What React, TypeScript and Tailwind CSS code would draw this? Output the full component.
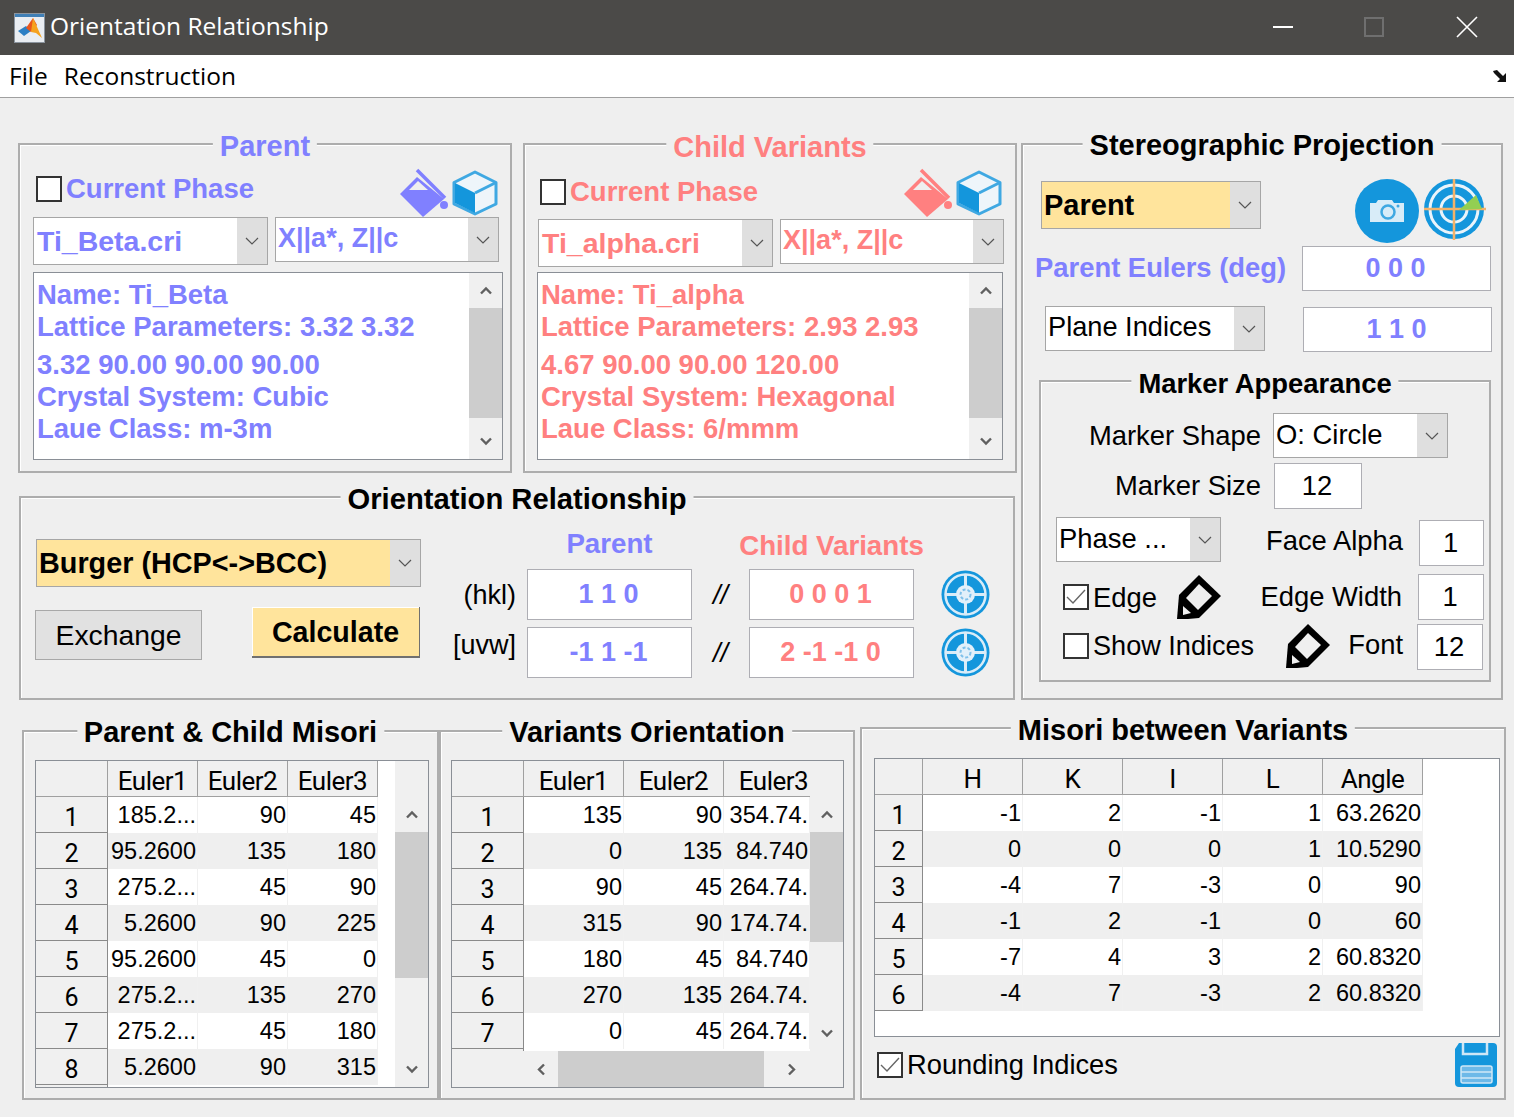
import React from 'react';

const BLUE = '#1496dc';

// Thin arrow of a combo box
const SelectArrow = () => (
  <svg width="14" height="8" viewBox="0 0 14 8" fill="none" stroke="#555" strokeWidth="1.2">
    <path d="M1 1l6 6 6-6" />
  </svg>
);

// Thick arrow of a scrollbar, rotated per direction
const ScrollArrow = ({ className = '' }: { className?: string }) => (
  <svg width="12" height="9" viewBox="0 0 12 9" fill="none" stroke="#606060" strokeWidth="2.4" className={className}>
    <path d="M1 7.5l5-5 5 5" />
  </svg>
);

const Bucket = ({ color }: { color: string }) => (
  <svg width="48" height="50" viewBox="0 0 48 50">
    <path d="M0 26L17 9L44 31L23 49Z" fill={color} />
    <path d="M17 2L45 30" stroke={color} strokeWidth="3.5" />
    <path d="M9 22L18 13L28 22Z" fill="#efefef" />
    <circle cx="44" cy="37" r="4" fill={color} />
  </svg>
);

const Cube = () => (
  <svg width="46" height="46" viewBox="0 0 46 46">
    <path d="M23 2L44 12.5V34L23 44L2 34V12.5Z" fill="#eef5fa" stroke="#3fa8e2" strokeWidth="3" strokeLinejoin="round" />
    <path d="M3 13L23 23V43L3 33Z" fill={BLUE} />
    <path d="M23 23L44 12.5" stroke="#3fa8e2" strokeWidth="3" />
  </svg>
);

const Camera = () => (
  <svg width="64" height="64" viewBox="0 0 64 64" className="shrink-0">
    <circle cx="32" cy="32" r="32" fill={BLUE} />
    <path d="M15 24h6l2-3h14l2 3h10v19H15z" fill="#d8ecf8" />
    <circle cx="33" cy="33" r="6.5" fill="none" stroke="#3fa8e2" strokeWidth="2.5" />
    <circle cx="43" cy="27" r="1.5" fill="#3fa8e2" />
  </svg>
);

const Radar = () => (
  <svg width="62" height="62" viewBox="0 0 62 62" className="shrink-0">
    <circle cx="30" cy="30" r="30" fill={BLUE} />
    <circle cx="30" cy="30" r="24" fill="none" stroke="#eaf4fb" strokeWidth="3" />
    <circle cx="30" cy="30" r="13" fill="none" stroke="#eaf4fb" strokeWidth="3" />
    <path d="M30 0V61M0 30H62" stroke="#f3b26a" strokeWidth="2.5" />
    <path d="M35 31L52 16L58 30Z" fill="#93cf52" />
  </svg>
);

const Target = () => (
  <svg width="49" height="49" viewBox="0 0 49 49" className="shrink-0">
    <circle cx="24.5" cy="24.5" r="24" fill={BLUE} />
    <circle cx="24.5" cy="24.5" r="20" fill="none" stroke="#d9ecf8" strokeWidth="2.5" />
    <path d="M24.5 4V45M4 24.5H45" stroke="#d9ecf8" strokeWidth="3" />
    <circle cx="24.5" cy="24.5" r="9.5" fill="#e2f0fa" />
    <circle cx="24.5" cy="24.5" r="5" fill="none" stroke="#7fc0ea" strokeWidth="2" strokeDasharray="3 2" />
  </svg>
);

const Pen = () => (
  <svg width="46" height="46" viewBox="0 0 46 46" className="shrink-0">
    <path d="M23 1L45 22L23 44L12 45H1L3 21Z" fill="#000" />
    <path d="M23 10L36 22L22 36L10 24Z" fill="#efefef" />
    <path d="M7 32L15 39L7 41Z" fill="#efefef" />
  </svg>
);

const Save = () => (
  <svg width="42" height="44" viewBox="0 0 42 44" className="shrink-0">
    <path d="M4 0H38Q42 0 42 4V40Q42 44 38 44H4Q0 44 0 40V6Z" fill={BLUE} />
    <path d="M8 0V11H32V0" fill="none" stroke="#cfe7f6" strokeWidth="2.5" />
    <rect x="6" y="23" width="31" height="17" rx="2" fill="#6db9e8" stroke="#cfe7f6" strokeWidth="1.5" />
    <path d="M6 29H37M6 35H37" stroke="#cfe7f6" strokeWidth="1.5" />
  </svg>
);

const MatlabIcon = () => (
  <svg width="31" height="30" viewBox="0 0 31 30" className="shrink-0">
    <rect x="0.5" y="0.5" width="30" height="29" fill="#e9edf2" stroke="#8b949e" />
    <rect x="1" y="1" width="29" height="3" fill="#3f7fb6" />
    <path d="M4 18L12 13L17 18L10 23Z" fill="#2c7fc4" />
    <path d="M12 15L19 5L23 12L17 19Z" fill="#e8551d" />
    <path d="M19 5L28 25L22 20L17 19Z" fill="#f6a21e" />
  </svg>
);

const Panel = ({ title, titleColor = 'text-black', titleSize = 'text-[29px]', titleTop = '-top-[14px]', className = '', children }: {
  title: string;
  titleColor?: string;
  titleSize?: string;
  titleTop?: string;
  className?: string;
  children: React.ReactNode;
}) => (
  <div className={`relative shrink-0 border-2 border-[#adadad] shadow-[inset_1px_1px_0_#fff] ${className}`}>
    <div className={`absolute left-1/2 -translate-x-1/2 whitespace-nowrap bg-[#efefef] px-[7px] font-bold leading-[30px] ${titleTop} ${titleColor} ${titleSize}`}>
      {title}
    </div>
    {children}
  </div>
);

const Select = ({ text, className = '', textClass = '', bg = 'bg-white' }: {
  text: string;
  className?: string;
  textClass?: string;
  bg?: string;
}) => (
  <div className={`flex shrink-0 border border-[#a6a6a6] ${bg} ${className}`}>
    <div className={`flex-1 overflow-hidden whitespace-nowrap pl-[2px] leading-[40px] ${textClass}`}>{text}</div>
    <div className="flex w-[30px] items-center justify-center bg-[#dfdfdf]">
      <SelectArrow />
    </div>
  </div>
);

const Field = ({ text, className = '', textClass = '' }: { text: string; className?: string; textClass?: string }) => (
  <div className={`flex shrink-0 items-center justify-center border border-[#aeaeb4] bg-white pr-[2px] ${textClass} ${className}`}>{text}</div>
);

const Check = ({ checked = false }: { checked?: boolean }) => (
  <div className="flex h-[26px] w-[26px] shrink-0 items-center justify-center border-2 border-[#333] bg-white">
    {checked && (
      <svg width="20" height="16" viewBox="0 0 20 16" fill="none" stroke="#666" strokeWidth="1.4">
        <path d="M1 8l6 6L19 1" />
      </svg>
    )}
  </div>
);

const VScroll = ({ thumb, topGap = 'h-[35px]' }: { thumb: string; topGap?: string }) => (
  <div className="flex h-full w-[33px] shrink-0 flex-col items-center bg-[#f0f0f0]">
    <div className={`flex w-full items-center justify-center ${topGap}`}>
      <ScrollArrow />
    </div>
    <div className={`w-full bg-[#cdcdcd] ${thumb}`} />
    <div className="flex-1" />
    <div className="flex h-[36px] w-full items-center justify-center">
      <ScrollArrow className="rotate-180" />
    </div>
  </div>
);

// Parent and child blocks share this layout, only the small offsets differ
const PhasePanel = ({ title, color, file, name, lines, rowClass, checkClass, listClass, titleTop }: {
  title: string;
  color: string;
  file: string;
  name: string;
  lines: string[];
  rowClass: string;
  checkClass: string;
  listClass: string;
  titleTop?: string;
}) => (
  <Panel title={title} titleColor={color} titleTop={titleTop} className="h-[330px] w-[494px]">
    <div className={`flex ${rowClass}`}>
      <div className={`flex items-center gap-[4px] ${checkClass}`}>
        <Check />
        <span className={`whitespace-nowrap text-[27.5px] font-bold leading-[26px] ${color}`}>Current Phase</span>
      </div>
      <div className="ml-auto flex items-start gap-[4px]">
        <Bucket color={color === 'text-[#8080ff]' ? '#8080ff' : '#ff8080'} />
        <div className="mt-[2px]">
          <Cube />
        </div>
      </div>
    </div>
    <div className="ml-[13px] flex gap-[7px]">
      <Select text={file} className="h-[48px] w-[235px]" textClass={`pl-[3px] text-[28.5px] font-bold leading-[46px] ${color}`} />
      <Select text="X||a*, Z||c" className="h-[45px] w-[224px]" textClass={`text-[27px] font-bold ${color}`} />
    </div>
    <div className={`flex h-[188px] border border-[#8a8f96] bg-white ${listClass}`}>
      <div className={`flex-1 pl-[3px] pt-[6px] text-[27.5px] font-bold leading-[32px] ${color}`}>
        <div>{name}</div>
        <div>{lines[0]}</div>
        <div className="mt-[6px]">{lines[1]}</div>
        <div>{lines[2]}</div>
        <div>{lines[3]}</div>
      </div>
      <VScroll thumb="h-[110px]" />
    </div>
  </Panel>
);

const Table = ({ headers, rows, headClass, colClasses, headColClasses, gridClass }: {
  headers: string[];
  rows: (string | number)[][];
  headClass: string;
  colClasses: string[];
  headColClasses?: string[];
  gridClass: string;
}) => (
  <div className={`overflow-hidden ${gridClass}`}>
    <div className="flex h-[36px]">
      <div className={`shrink-0 border-r border-b border-[#a0a0a0] bg-[#f0f0f0] ${headClass}`} />
      {headers.map((h, i) => (
        <div
          key={h}
          className={`shrink-0 border-r border-b border-[#a0a0a0] bg-[#f0f0f0] text-center font-['Roboto',sans-serif] text-[26px] leading-[41px] tracking-[-0.5px] ${(headColClasses ?? colClasses)[i]}`}
        >
          {h}
        </div>
      ))}
    </div>
    {rows.map((row, r) => (
      <div key={r} className="flex h-[36px]">
        <div className={`shrink-0 border-r border-b border-[#8a8a8a] bg-[#f0f0f0] text-center font-['Roboto',sans-serif] text-[25px] leading-[42px] ${headClass}`}>
          {row.length > 0 ? r + 1 : ''}
        </div>
        {row.map((cell, c) => (
          <div
            key={c}
            className={`shrink-0 overflow-hidden whitespace-nowrap border-r border-[#f0f0f0] pr-[1px] text-right text-[23.5px] leading-[37px] ${r % 2 === 0 ? 'bg-white' : 'bg-[#efefef]'} ${colClasses[c]}`}
          >
            {cell}
          </div>
        ))}
      </div>
    ))}
  </div>
);

const misoriRows = [
  ['185.2...', 90, 45],
  ['95.2600', 135, 180],
  ['275.2...', 45, 90],
  ['5.2600', 90, 225],
  ['95.2600', 45, 0],
  ['275.2...', 135, 270],
  ['275.2...', 45, 180],
  ['5.2600', 90, 315],
  [],
];

const variantRows = [
  [135, 90, '354.74.'],
  [0, 135, '84.740'],
  [90, 45, '264.74.'],
  [315, 90, '174.74.'],
  [180, 45, '84.740'],
  [270, 135, '264.74.'],
  [0, 45, '264.74.'],
  [],
];

const betweenRows = [
  [-1, 2, -1, 1, '63.2620'],
  [0, 0, 0, 1, '10.5290'],
  [-4, 7, -3, 0, 90],
  [-1, 2, -1, 0, 60],
  [-7, 4, 3, 2, '60.8320'],
  [-4, 7, -3, 2, '60.8320'],
];

const inputText = 'text-[27px] font-bold text-[#8080ff]';
const inputRed = 'text-[27px] font-bold text-[#ff8080]';

const App = () => {
  return (
    <div className="h-[1117px] w-[1514px] overflow-hidden bg-[#efefef] font-['Liberation_Sans',Arial,sans-serif] text-black">
      {/* Title bar */}
      <div className="flex h-[55px] items-center bg-[#4b4a48] pl-[14px] text-white">
        <MatlabIcon />
        <span className="mb-[3px] ml-[5px] font-['Open_Sans',sans-serif] text-[24.5px]">Orientation Relationship</span>
        <div className="ml-auto flex items-center pb-[2px]">
          <div className="h-[2px] w-[20px] bg-white" />
          <div className="ml-[71px] h-[20px] w-[20px] border-2 border-[#6f6f6f]" />
          <svg width="22" height="22" viewBox="0 0 22 22" stroke="#fff" strokeWidth="1.6" className="ml-[72px] mr-[36px]">
            <path d="M1 1L21 21M21 1L1 21" />
          </svg>
        </div>
      </div>

      {/* Menu bar */}
      <div className="flex h-[43px] items-center border-b border-[#a0a0a0] bg-white pl-[9px] font-['Open_Sans',sans-serif] text-[24.5px]">
        <span>File</span>
        <span className="ml-[16px]">Reconstruction</span>
        <svg width="16" height="14" viewBox="0 0 16 14" className="ml-auto mr-[6px]">
          <path d="M1 2L5 1L11 7L14 4V13H5L8 10L2 4Z" fill="#111" />
        </svg>
      </div>

      {/* Upper area */}
      <div className="ml-[18px] mt-[45px] flex">
        <div className="w-[999px] shrink-0">
          <div className="flex gap-[11px]">
            <PhasePanel
              title="Parent"
              color="text-[#8080ff]"
              file="Ti_Beta.cri"
              name="Name: Ti_Beta"
              lines={['Lattice Parameters: 3.32 3.32', '3.32 90.00 90.00 90.00', 'Crystal System: Cubic', 'Laue Class: m-3m']}
              rowClass="ml-[16px] mr-[12px] mt-[23px] h-[49px]"
              checkClass="mt-[8px] h-[26px]"
              listClass="ml-[13px] mt-[7px] w-[470px]"
            />
            <PhasePanel
              title="Child Variants"
              titleTop="-top-[13px]"
              color="text-[#ff8080]"
              file="Ti_alpha.cri"
              name="Name: Ti_alpha"
              lines={['Lattice Parameters: 2.93 2.93', '4.67 90.00 90.00 120.00', 'Crystal System: Hexagonal', 'Laue Class: 6/mmm']}
              rowClass="ml-[15px] mr-[13px] mt-[23px] h-[51px]"
              checkClass="mt-[11px] h-[26px]"
              listClass="ml-[12px] mt-[5px] w-[466px]"
            />
          </div>

          {/* Orientation relationship */}
          <Panel title="Orientation Relationship" titleSize="text-[29.2px]" className="ml-px mt-[23px] flex h-[204px] w-[996px]">
            <div className="w-[400px] shrink-0">
              <Select text="Burger (HCP<->BCC)" bg="bg-[#ffe49c]" className="ml-[15px] mt-[41px] h-[48px] w-[385px]" textClass="text-[28.8px] font-bold leading-[46px]" />
              <div className="ml-[14px] mt-[20px] flex items-start">
                <div className="mt-[3px] flex h-[50px] w-[167px] items-center justify-center border border-[#a8a8a8] bg-[#e1e1e1] text-[28.3px]">Exchange</div>
                <div className="ml-[50px] flex h-[51px] w-[168px] items-center justify-center border-r border-b-2 border-[#707070] bg-[#ffe49c] pt-[2px] text-[28.6px] font-bold shadow-[inset_1px_1px_0_#fff]">Calculate</div>
              </div>
            </div>
            <div className="flex-1">
              <div className="mt-[31px] flex h-[40px] items-start pl-[106px] text-[27.7px] font-bold">
                <div className="w-[165px] text-center leading-[30px] text-[#8080ff]">Parent</div>
                <div className="ml-[57px] mt-[2px] w-[165px] whitespace-nowrap text-center leading-[30px] text-[#ff8080]">
                  <span className="-mx-[10px] inline-block">Child Variants</span>
                </div>
              </div>
              <div className="flex items-center">
                <div className="w-[95px] text-right text-[27px] leading-[30px]">(hkl)</div>
                <Field text="1 1 0" className="ml-[11px] h-[51px] w-[165px]" textClass={inputText} />
                <div className="w-[57px] text-center text-[27px] leading-[30px] italic">//</div>
                <Field text="0 0 0 1" className="h-[51px] w-[165px]" textClass={inputRed} />
                <div className="ml-[27px]"><Target /></div>
              </div>
              <div className="mt-[7px] flex items-center">
                <div className="mb-[15px] w-[95px] text-right text-[27px] leading-[30px]">[uvw]</div>
                <Field text="-1 1 -1" className="ml-[11px] h-[51px] w-[165px]" textClass={inputText} />
                <div className="w-[57px] text-center text-[27px] leading-[30px] italic">//</div>
                <Field text="2 -1 -1 0" className="h-[51px] w-[165px]" textClass={inputRed} />
                <div className="ml-[27px]"><Target /></div>
              </div>
            </div>
          </Panel>
        </div>

        {/* Stereographic projection */}
        <Panel title="Stereographic Projection" titleTop="-top-[15px]" className="ml-[4px] h-[557px] w-[482px]">
          <div className="ml-[18px] mr-[15px] mt-[34px] flex h-[64px] items-start">
            <Select text="Parent" bg="bg-[#ffe49c]" className="mt-[2px] h-[48px] w-[220px]" textClass="text-[29px] font-bold leading-[46px]" />
            <div className="ml-auto flex gap-[5px]">
              <Camera />
              <Radar />
            </div>
          </div>
          <div className="ml-[12px] mt-[3px] flex items-center">
            <div className="mb-[2px] w-[267px] whitespace-nowrap text-[27.4px] font-bold text-[#8080ff]">Parent Eulers (deg)</div>
            <Field text="0 0 0" className="h-[45px] w-[189px]" textClass={inputText} />
          </div>
          <div className="ml-[22px] mt-[15px] flex items-start">
            <Select text="Plane Indices" className="h-[45px] w-[220px]" textClass="text-[27.2px]" />
            <Field text="1 1 0" className="ml-[38px] mt-px h-[45px] w-[189px]" textClass={inputText} />
          </div>

          {/* Marker appearance */}
          <Panel title="Marker Appearance" titleSize="text-[27.4px]" titleTop="-top-[13px]" className="ml-[16px] mt-[28px] h-[302px] w-[452px] text-[27.4px]">
            <div className="mt-[31px] flex items-center">
              <div className="w-[220px] text-right">Marker Shape</div>
              <Select text="O: Circle" className="ml-[12px] h-[45px] w-[175px]" textClass="pt-px" />
            </div>
            <div className="mt-[5px] flex items-center">
              <div className="w-[220px] text-right">Marker Size</div>
              <Field text="12" className="ml-[13px] h-[46px] w-[88px]" />
            </div>
            <div className="mt-[8px] flex items-start">
              <Select text="Phase ..." className="ml-[15px] h-[45px] w-[165px]" textClass="pt-px" />
              <div className="mt-[3px] w-[182px] text-right leading-[42px]">Face Alpha</div>
              <Field text="1" className="ml-[16px] mt-[3px] h-[46px] w-[65px]" />
            </div>
            <div className="mt-[8px] flex items-center">
              <div className="flex w-[135px] items-center gap-[4px] pl-[22px]">
                <Check checked />
                <span className="mt-[1px]">Edge</span>
              </div>
              <Pen />
              <div className="w-[180px] text-right">Edge Width</div>
              <Field text="1" className="ml-[16px] h-[46px] w-[66px]" />
            </div>
            <div className="mt-[2px] flex items-center">
              <div className="flex w-[244px] items-center gap-[4px] pl-[22px]">
                <Check />
                <span className="mt-[1px] whitespace-nowrap text-[27.1px]">Show Indices</span>
              </div>
              <Pen />
              <div className="mb-[2px] w-[72px] text-right">Font</div>
              <Field text="12" className="ml-[14px] mt-[2px] h-[46px] w-[66px]" />
            </div>
          </Panel>
        </Panel>
      </div>

      {/* Tables */}
      <div className="mt-[27px] flex pl-[22px]">
        <Panel title="Parent & Child Misori" titleTop="-top-[15px]" className="mt-[3px] h-[370px] w-[417px]">
          <div className="ml-[11px] mt-[28px] flex h-[328px] w-[394px] border border-[#8a8f96] bg-white">
            <Table
              headers={['Euler1', 'Euler2', 'Euler3']}
              rows={misoriRows}
              headClass="w-[72px]"
              colClasses={['w-[90px]', 'w-[90px]', 'w-[90px]']}
              gridClass="h-full w-[359px] shrink-0"
            />
            <div className="flex h-full flex-col">
              <div className="h-[36px] bg-[#f0f0f0]" />
              <div className="flex-1 overflow-hidden">
                <VScroll thumb="h-[146px]" />
              </div>
            </div>
          </div>
        </Panel>
        <Panel title="Variants Orientation" titleTop="-top-[15px]" className="mt-[3px] h-[370px] w-[416px]">
          <div className="ml-[10px] mt-[28px] h-[328px] w-[393px] border border-[#8a8f96] bg-white">
            <div className="flex h-[290px]">
              <Table
                headers={['Euler1', 'Euler2', 'Euler3']}
                rows={variantRows}
                headClass="w-[72px]"
                colClasses={['w-[100px]', 'w-[100px]', 'w-[86px]']}
                headColClasses={['w-[100px]', 'w-[100px]', 'w-[100px]']}
                gridClass="h-full w-[358px] shrink-0"
              />
              <div className="h-full">
                <div className="h-[36px] bg-[#f0f0f0]" />
                <div className="h-[254px]">
                  <VScroll thumb="h-[110px]" />
                </div>
              </div>
            </div>
            <div className="flex h-[36px] items-center bg-[#f0f0f0]">
              <div className="flex w-[106px] justify-end pr-[11px]">
                <ScrollArrow className="-rotate-90" />
              </div>
              <div className="h-full w-[206px] bg-[#cdcdcd]" />
              <div className="flex w-[56px] justify-center">
                <ScrollArrow className="rotate-90" />
              </div>
            </div>
          </div>
        </Panel>
        <Panel title="Misori between Variants" className="ml-[5px] h-[373px] w-[646px]">
          <div className="ml-[12px] mt-[29px] flex h-[279px] w-[626px] border border-[#8a8f96] bg-white">
            <Table
              headers={['H', 'K', 'I', 'L', 'Angle']}
              rows={betweenRows}
              headClass="w-[48px]"
              colClasses={['w-[100px]', 'w-[100px]', 'w-[100px]', 'w-[100px]', 'w-[100px]']}
              gridClass="h-full w-[548px] shrink-0"
            />
          </div>
          <div className="mr-[7px] mt-[6px] flex h-[44px] items-center pl-[15px]">
            <Check checked />
            <span className="ml-[4px] text-[27.3px]">Rounding Indices</span>
            <div className="ml-auto"><Save /></div>
          </div>
        </Panel>
      </div>
    </div>
  );
};

export default App;
